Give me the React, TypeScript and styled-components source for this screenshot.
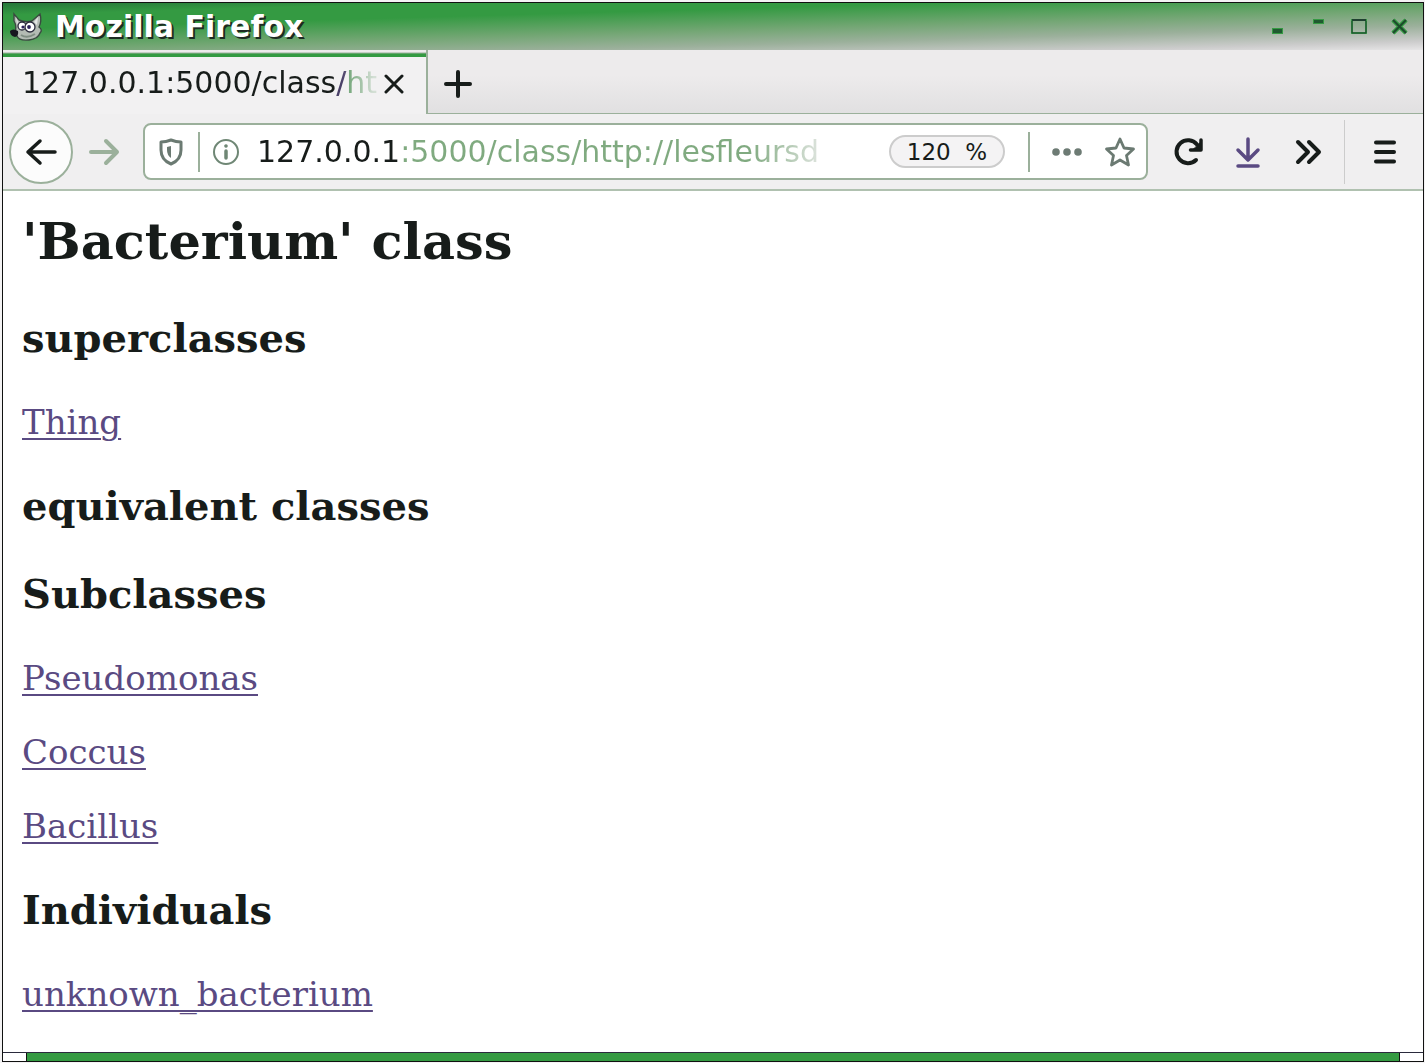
import React from "react";
import styled, { createGlobalStyle } from "styled-components";

const GlobalStyle = createGlobalStyle`
  *, *::before, *::after { box-sizing: border-box; }
  body { margin: 0; background: #fff; }
`;

const ink = "#171c1a";
const sage = "#9bb09b";
const purple = "#5a4a82";
const leaf = "#349a42";

const Desktop = styled.div`
  display: flex;
  min-height: 100vh;
  padding: 2px 1px 1px 2px;
  background: #f4f3f4;
  font-family: "DejaVu Sans", sans-serif;
  color: ${ink};
`;

const Frame = styled.div`
  flex: 1;
  min-width: 0;
  display: flex;
  flex-direction: column;
  border: 1px solid #111;
  background: #fff;
`;

const TitleBar = styled.header`
  display: flex;
  align-items: center;
  height: 47px;
  padding: 0 3px 0 6px;
  background: linear-gradient(
    178.4deg,
    #26753a 0%,
    #349a42 14%,
    #349a42 30%,
    #72a673 54%,
    #9bb09b 72%,
    #cccccc 90%,
    #e6e5e6 100%
  );
`;

const WindowTitle = styled.span`
  flex: 1;
  margin-left: 10px;
  font-size: 30px;
  line-height: 36px;
  font-weight: bold;
  color: #fff;
  text-shadow: 2px 2px 0 #1d2b22;
`;

const BareButton = styled.button`
  display: flex;
  align-items: center;
  justify-content: center;
  padding: 0;
  border: 0;
  background: none;
  color: inherit;
  font-family: inherit;
  cursor: pointer;
`;

const WindowButton = styled(BareButton)`
  width: 41px;
  height: 32px;
`;

const TabStrip = styled.div`
  display: flex;
  height: 64px;
  border-bottom: 1px solid ${sage};
  background: linear-gradient(#edebec 40%, #e1e0e1 100%);
`;

const Tab = styled.div`
  display: flex;
  align-items: center;
  width: 425px;
  height: 64px;
  margin-bottom: -1px;
  padding: 0 16px 0 19px;
  border-right: 2px solid ${sage};
  background: linear-gradient(#edebec 2px, ${sage} 3px, ${leaf} 4px, ${leaf} 7px, #f2f1f2 7px);
`;

const TabLabel = styled(BareButton)`
  flex: 1;
  min-width: 0;
  justify-content: flex-start;
  padding-top: 2px;
  font-size: 30px;
  line-height: 36px;
  white-space: nowrap;
  mask-image: linear-gradient(90deg, #000 320px, rgba(0, 0, 0, 0.2) 352px);
`;

const Faded = styled.span`
  color: ${(p) => p.color};
`;

const TabAction = styled(BareButton)<{ $width: number }>`
  width: ${(p) => p.$width}px;
  padding-top: 4px;
`;

const Toolbar = styled.nav`
  display: flex;
  align-items: center;
  height: 77px;
  padding: 0 8px 0 6px;
  border-bottom: 2px solid #b0c1b0;
  background: #f0eff0;
`;

const BackButton = styled(BareButton)`
  flex: none;
  width: 64px;
  height: 64px;
  border: 2px solid ${sage};
  border-radius: 50%;
  background: #fcfcfc;
`;

const ForwardButton = styled(BareButton)`
  flex: none;
  width: 62px;
  height: 64px;
  margin-right: 8px;
  color: ${sage};
`;

const ToolButton = styled(BareButton)`
  flex: none;
  width: 60px;
  height: 64px;
`;

const ToolRule = styled.span`
  flex: none;
  width: 1px;
  height: 64px;
  margin: 0 10px 0 6px;
  background: #cccccc;
`;

const AddressBar = styled.div`
  flex: 1;
  min-width: 0;
  display: flex;
  align-items: center;
  height: 57px;
  margin-right: 10px;
  padding: 0 10px 0 8px;
  border: 2px solid ${sage};
  border-radius: 8px;
  background: #fff;
`;

const FieldButton = styled(BareButton)<{ $width: number }>`
  flex: none;
  width: ${(p) => p.$width}px;
  height: 40px;
`;

const FieldRule = styled.span<{ $gap?: number }>`
  flex: none;
  width: 2px;
  height: 40px;
  margin-left: ${(p) => p.$gap ?? 0}px;
  background: ${sage};
`;

const AddressInput = styled.input`
  flex: 1;
  min-width: 0;
  height: 40px;
  margin: 0 68px 0 5px;
  padding: 0;
  border: 0;
  outline: 0;
  font-family: inherit;
  font-size: 30px;
  background: linear-gradient(
    90deg,
    ${ink} 142px,
    #80aa80 142px,
    #80aa80 calc(100% - 72px),
    rgba(128, 150, 128, 0.25) 100%
  );
  background-clip: text;
  -webkit-text-fill-color: transparent;
`;

const ZoomButton = styled(BareButton)`
  flex: none;
  width: 116px;
  height: 33px;
  margin-right: 23px;
  border: 2px solid #cccccc;
  border-radius: 17px;
  background: #f4f3f4;
  font-size: 23px;
  line-height: 28px;
  white-space: pre;
`;

const Page = styled.main`
  flex: 1;
  padding: 20px 19px 0;
  font-family: "DejaVu Serif", serif;
`;

const PageTitle = styled.h1`
  margin: 0 0 43px;
  font-size: 51px;
  line-height: 60px;
`;

const SectionTitle = styled.h2`
  margin: 40px 0;
  font-size: 40px;
  line-height: 48px;
`;

const Entry = styled.p`
  margin: 34px 0;
  font-size: 34px;
  line-height: 40px;
`;

const EntryLink = styled.a`
  color: ${purple};
  text-decoration: underline;
  text-decoration-thickness: 2px;
  text-underline-offset: 4px;
`;

const BottomBorder = styled.footer`
  display: flex;
  height: 9px;
  border-top: 1px solid #2a2a3c;
  background: ${leaf};
`;

const Grip = styled.span<{ $side: "left" | "right" }>`
  width: 24px;
  background: #fff;
  border-right: ${(p) => (p.$side === "left" ? "1px solid #111" : "0")};
  border-left: ${(p) => (p.$side === "right" ? "1px solid #111" : "0")};
  margin-left: ${(p) => (p.$side === "right" ? "auto" : "0")};
`;

const Wilber = () => (
  <svg width="36" height="30" viewBox="0 0 36 30" aria-hidden="true">
    <path
      d="M5 2 L10 8 Q17 11 23 9 L31 2 Q33 9 30 15 Q34 18 31 21 Q29 27 20 28 Q10 29 8 24 L6 21 Q8 14 5 9Z"
      fill="#b4bbb4"
      stroke="#3a4a40"
      strokeWidth="1.4"
    />
    <path d="M7 5 L9 10 L8 13Z M29 5 L25 10 L28 13Z" fill="#e4e6e4" />
    <path d="M12 23 Q18 27 26 22" fill="none" stroke="#7f8d82" strokeWidth="2" />
    <path d="M1 19 Q4 16 9 19 Q10 24 6 25 Q1 24 1 19Z" fill="#17171f" />
    <circle cx="13" cy="14" r="4" fill="#fff" stroke="#2b2b3c" strokeWidth="1.3" />
    <circle cx="21" cy="15" r="5" fill="#fff" stroke="#2b2b3c" strokeWidth="1.3" />
    <circle cx="14" cy="15" r="1.600" fill="#2b2058" />
    <circle cx="20" cy="15" r="1.900" fill="#2b2058" />
  </svg>
);

const controls = [
  {
    name: "Iconify",
    shape: <rect x="4.500" y="10.500" width="10" height="5" fill="#1f5a30" stroke={leaf} />,
  },
  {
    name: "Shade",
    shape: <rect x="4.500" y="1.500" width="10" height="4" fill="#1f5a30" stroke={leaf} />,
  },
  {
    name: "Maximize",
    shape: (
      <>
        <rect x="2" y="2" width="14" height="13" fill="none" stroke={leaf} strokeWidth="2" />
        <path d="M2 2H16" stroke="#1f4030" strokeWidth="2" />
        <path d="M2 3V15H16V3" fill="none" stroke="#1f4030" strokeWidth="1" />
      </>
    ),
  },
  {
    name: "Close window",
    shape: (
      <>
        <path d="M2 2L15 15M15 2L2 15" stroke={leaf} strokeWidth="4.500" />
        <path d="M2 2L15 15M15 2L2 15" stroke="#1d4a2c" strokeWidth="2" />
      </>
    ),
  },
];

const line = { fill: "none", stroke: "currentColor", strokeLinecap: "round", strokeLinejoin: "round" } as const;

const BackIcon = () => (
  <svg width="32" height="32" viewBox="0 0 32 32" {...line} strokeWidth="3.500">
    <path d="M30 16H3M15 5L3 16L15 27" />
  </svg>
);

const ForwardIcon = () => (
  <svg width="32" height="32" viewBox="0 0 32 32" {...line} strokeWidth="4">
    <path d="M3 16H29M18 5L29 16L18 27" />
  </svg>
);

const ShieldIcon = () => (
  <svg width="24" height="28" viewBox="0 0 24 28" {...line} strokeWidth="3" stroke="#6b7a72">
    <path d="M12 2Q17 4 22 4V12Q22 22 12 26Q2 22 2 12V4Q7 4 12 2Z" />
    <path d="M12 8V20Q8 17 8 12V9Z" fill="#6b7a72" stroke="none" />
  </svg>
);

const InfoIcon = () => (
  <svg width="28" height="28" viewBox="0 0 28 28" {...line} stroke="#6f8775" strokeWidth="2">
    <circle cx="14" cy="14" r="12" />
    <path d="M14 13V20" strokeWidth="3.500" />
    <circle cx="14" cy="8" r="1.200" fill="#6f8775" strokeWidth="1.200" />
  </svg>
);

const DotsIcon = () => (
  <svg width="32" height="10" viewBox="0 0 32 10" fill="#6d7b74">
    <circle cx="5" cy="5" r="3.800" />
    <circle cx="16" cy="5" r="3.800" />
    <circle cx="27" cy="5" r="3.800" />
  </svg>
);

const StarIcon = () => (
  <svg width="32" height="32" viewBox="0 0 32 32" {...line} stroke="#6b7a72" strokeWidth="2.800">
    <path d="M16 3L20 12L29.500 13L22.500 19.500L24.500 29L16 24L7.500 29L9.500 19.500L2.500 13L12 12Z" />
  </svg>
);

const ReloadIcon = () => (
  <svg width="32" height="32" viewBox="0 0 32 32" {...line} strokeWidth="4">
    <path d="M24 24A11.500 11.500 0 1 1 25 8.500" />
    <path d="M29 4V14H18.500" strokeWidth="3.500" />
    <path d="M28 7V13H22Z" fill="currentColor" strokeWidth="1" />
  </svg>
);

const DownloadIcon = () => (
  <svg width="28" height="32" viewBox="0 0 28 32" {...line} stroke={purple} strokeWidth="3.500">
    <path d="M14 3V23M4 14L14 24L24 14M4 30H24" />
  </svg>
);

const MoreIcon = () => (
  <svg width="28" height="26" viewBox="0 0 28 26" {...line} strokeWidth="4">
    <path d="M4 3L14 13L4 23M15 3L25 13L15 23" />
  </svg>
);

const MenuIcon = () => (
  <svg width="26" height="26" viewBox="0 0 26 26" {...line} strokeWidth="4">
    <path d="M4 3.500H22M4 13H22M4 22.500H22" />
  </svg>
);

const sections = [
  { title: "superclasses", entries: ["Thing"] },
  { title: "equivalent classes", entries: [] },
  { title: "Subclasses", entries: ["Pseudomonas", "Coccus", "Bacillus"] },
  { title: "Individuals", entries: ["unknown_bacterium"] },
];

export default function App() {
  return (
    <>
      <GlobalStyle />
      <Desktop>
        <Frame>
          <TitleBar>
            <Wilber />
            <WindowTitle>Mozilla Firefox</WindowTitle>
            {controls.map((c) => (
              <WindowButton key={c.name} aria-label={c.name}>
                <svg width="18" height="17" viewBox="0 0 18 17">
                  {c.shape}
                </svg>
              </WindowButton>
            ))}
          </TitleBar>
          <TabStrip>
            <Tab>
              <TabLabel>
                <span>127.0.0.1:5000/class</span>
                <Faded color="#4a4068">/</Faded>
                <Faded color="#5f9a66">ht</Faded>
              </TabLabel>
              <TabAction $width={32} aria-label="Close tab">
                <svg width="20" height="20" viewBox="0 0 20 20" {...line} strokeWidth="3">
                  <path d="M2 2L18 18M18 2L2 18" />
                </svg>
              </TabAction>
            </Tab>
            <TabAction $width={60} aria-label="New tab">
              <svg width="28" height="28" viewBox="0 0 28 28" {...line} strokeWidth="4">
                <path d="M14 2V26M2 14H26" />
              </svg>
            </TabAction>
          </TabStrip>
          <Toolbar>
            <BackButton aria-label="Back">
              <BackIcon />
            </BackButton>
            <ForwardButton aria-label="Forward">
              <ForwardIcon />
            </ForwardButton>
            <AddressBar>
              <FieldButton $width={36} aria-label="Tracking protection">
                <ShieldIcon />
              </FieldButton>
              <FieldRule $gap={9} />
              <FieldButton $width={52} aria-label="Site information">
                <InfoIcon />
              </FieldButton>
              <AddressInput aria-label="Address" defaultValue="127.0.0.1:5000/class/http://lesfleursd" />
              <ZoomButton>120  %</ZoomButton>
              <FieldRule />
              <FieldButton $width={74} aria-label="Page actions">
                <DotsIcon />
              </FieldButton>
              <FieldButton $width={32} aria-label="Bookmark this page">
                <StarIcon />
              </FieldButton>
            </AddressBar>
            <ToolButton aria-label="Reload">
              <ReloadIcon />
            </ToolButton>
            <ToolButton aria-label="Downloads">
              <DownloadIcon />
            </ToolButton>
            <ToolButton aria-label="More tools">
              <MoreIcon />
            </ToolButton>
            <ToolRule />
            <ToolButton aria-label="Menu">
              <MenuIcon />
            </ToolButton>
          </Toolbar>
          <Page>
            <PageTitle>'Bacterium' class</PageTitle>
            {sections.map((s) => (
              <React.Fragment key={s.title}>
                <SectionTitle>{s.title}</SectionTitle>
                {s.entries.map((e) => (
                  <Entry key={e}>
                    <EntryLink href={`#${e}`}>{e}</EntryLink>
                  </Entry>
                ))}
              </React.Fragment>
            ))}
          </Page>
          <BottomBorder>
            <Grip $side="left" />
            <Grip $side="right" />
          </BottomBorder>
        </Frame>
      </Desktop>
    </>
  );
}
